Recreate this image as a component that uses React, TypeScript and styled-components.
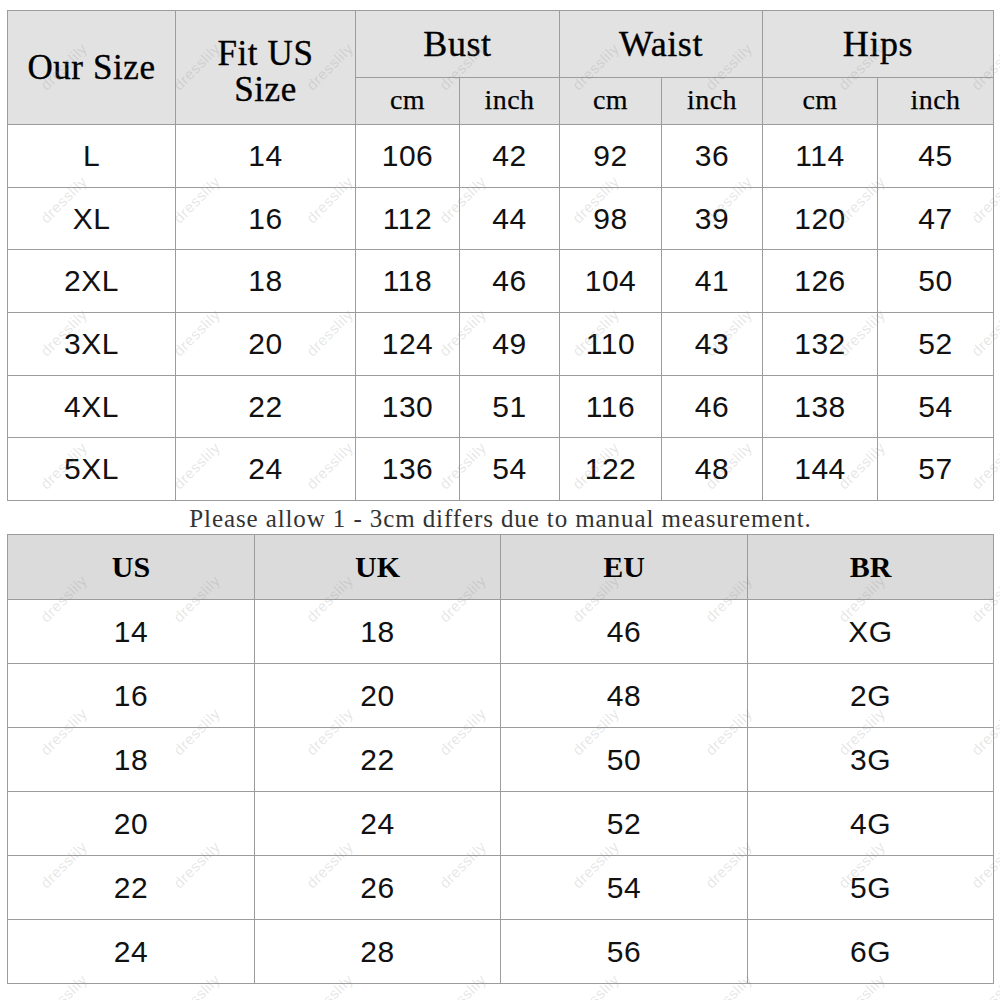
import React from "react";
import styled, { createGlobalStyle } from "styled-components";

const Global = createGlobalStyle`
  html, body { margin: 0; padding: 0; background: #ffffff; }
  * { box-sizing: border-box; }
`;

const Page = styled.div`
  position: relative;
  width: 1000px;
  height: 1000px;
  overflow: hidden;
  background: #ffffff;
  padding: 10px 0 0 7px;
`;

const LINE = "#9c9c9c";

const SizeGrid = styled.div`
  display: grid;
  width: 987px;
  grid-template-columns: 167px 179px 103px 99px 101px 100px 114px 115px;
  grid-template-rows: 66px 46px 62px 61px 62px 62px 61px 62px;
  gap: 1px;
  padding: 1px;
  background: ${LINE};
`;

const ConvGrid = styled.div`
  display: grid;
  width: 987px;
  grid-template-columns: 246px 245px 246px 245px;
  grid-template-rows: 64px repeat(6, 63px);
  gap: 1px;
  padding: 1px;
  background: ${LINE};
`;

const HeadCell = styled.div<{ $rows?: number; $cols?: number; $size?: number; $shift?: number }>`
  grid-row: span ${(p) => p.$rows ?? 1};
  grid-column: span ${(p) => p.$cols ?? 1};
  background: #e2e2e2;
  display: flex;
  align-items: center;
  justify-content: center;
  text-align: center;
  font-family: "Liberation Serif", "Times New Roman", serif;
  font-size: ${(p) => p.$size ?? 36}px;
  line-height: 36px;
  letter-spacing: 0.6px;
  color: #000000;
  -webkit-text-stroke: 0.35px #000000;
  padding-top: ${(p) => p.$shift ?? 0}px;
`;

const UnitCell = styled.div`
  background: #e2e2e2;
  display: flex;
  align-items: center;
  justify-content: center;
  font-family: "Liberation Serif", "Times New Roman", serif;
  font-size: 28px;
  letter-spacing: 0.4px;
  color: #000000;
  -webkit-text-stroke: 0.25px #000000;
  padding-bottom: 2px;
`;

const DataCell = styled.div`
  background: #ffffff;
  display: flex;
  align-items: center;
  justify-content: center;
  font-family: "Liberation Sans", Arial, sans-serif;
  font-size: 30px;
  letter-spacing: 0.5px;
  color: #111111;
`;

const ConvHead = styled.div`
  background: #dbdbdb;
  display: flex;
  align-items: center;
  justify-content: center;
  font-family: "Liberation Serif", "Times New Roman", serif;
  font-weight: 700;
  font-size: 30px;
  color: #000000;
`;

const Note = styled.div`
  width: 987px;
  height: 33px;
  display: flex;
  align-items: flex-end;
  justify-content: center;
  font-family: "Liberation Serif", "Times New Roman", serif;
  font-size: 25px;
  line-height: 28px;
  letter-spacing: 0.9px;
  color: #333333;
  white-space: nowrap;
  padding-bottom: 1px;
`;

const Watermarks = styled.div`
  position: absolute;
  top: 0;
  left: -3px;
  width: 1064px;
  height: 1064px;
  pointer-events: none;
  display: grid;
  grid-template-columns: repeat(8, 133px);
  grid-auto-rows: 133px;
`;

const Mark = styled.div`
  display: flex;
  align-items: center;
  justify-content: center;
  font-family: "Liberation Sans", Arial, sans-serif;
  font-size: 15px;
  letter-spacing: 0.5px;
  color: rgba(140, 140, 140, 0.22);
  transform: rotate(-45deg);
`;

const sizeRows: string[][] = [
  ["L", "14", "106", "42", "92", "36", "114", "45"],
  ["XL", "16", "112", "44", "98", "39", "120", "47"],
  ["2XL", "18", "118", "46", "104", "41", "126", "50"],
  ["3XL", "20", "124", "49", "110", "43", "132", "52"],
  ["4XL", "22", "130", "51", "116", "46", "138", "54"],
  ["5XL", "24", "136", "54", "122", "48", "144", "57"],
];

const convRows: string[][] = [
  ["14", "18", "46", "XG"],
  ["16", "20", "48", "2G"],
  ["18", "22", "50", "3G"],
  ["20", "24", "52", "4G"],
  ["22", "26", "54", "5G"],
  ["24", "28", "56", "6G"],
];

export default function App() {
  return (
    <>
      <Global />
      <Page>
        <SizeGrid>
          <HeadCell $rows={2} $size={35}>Our Size</HeadCell>
          <HeadCell $rows={2} $size={35} $shift={8}>
            Fit US
            <br />
            Size
          </HeadCell>
          <HeadCell $cols={2}>Bust</HeadCell>
          <HeadCell $cols={2}>Waist</HeadCell>
          <HeadCell $cols={2}>Hips</HeadCell>
          <UnitCell>cm</UnitCell>
          <UnitCell>inch</UnitCell>
          <UnitCell>cm</UnitCell>
          <UnitCell>inch</UnitCell>
          <UnitCell>cm</UnitCell>
          <UnitCell>inch</UnitCell>
          {sizeRows.map((row, i) =>
            row.map((v, j) => <DataCell key={`s${i}-${j}`}>{v}</DataCell>)
          )}
        </SizeGrid>
        <Note>Please allow 1 - 3cm differs due to manual measurement.</Note>
        <ConvGrid>
          <ConvHead>US</ConvHead>
          <ConvHead>UK</ConvHead>
          <ConvHead>EU</ConvHead>
          <ConvHead>BR</ConvHead>
          {convRows.map((row, i) =>
            row.map((v, j) => <DataCell key={`c${i}-${j}`}>{v}</DataCell>)
          )}
        </ConvGrid>
        <Watermarks>
          {Array.from({ length: 64 }).map((_, i) => (
            <Mark key={i}>dresslily</Mark>
          ))}
        </Watermarks>
      </Page>
    </>
  );
}
